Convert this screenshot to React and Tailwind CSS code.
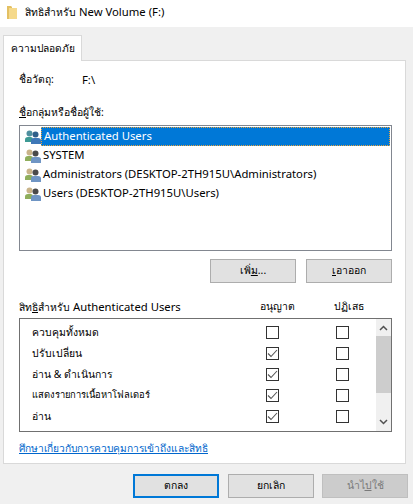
import React from 'react';

const principals = [
  'Authenticated Users',
  'SYSTEM',
  'Administrators (DESKTOP-2TH915U\\Administrators)',
  'Users (DESKTOP-2TH915U\\Users)',
];

const permissions = [
  { name: 'ควบคุมทั้งหมด', size: 'text-[10.4px]', allow: false },
  { name: 'ปรับเปลี่ยน', size: 'text-[10.4px]', allow: true },
  { name: 'อ่าน & ดำเนินการ', size: 'text-[10.4px]', allow: true },
  { name: 'แสดงรายการเนื้อหาโฟลเดอร์', size: 'text-[9.4px]', allow: true },
  { name: 'อ่าน', size: 'text-[10.4px]', allow: true },
];

const FolderIcon = () => (
  <svg width="10" height="13" viewBox="0 0 10 13">
    <path d="M0 0h4l1 1v12H0z" fill="#e3c063" />
    <path d="M2 2h8v11H2z" fill="#f5d98b" />
  </svg>
);

const UsersIcon = ({ selected }) => (
  <svg width="16" height="14" viewBox="0 0 16 14">
    <circle cx="4.5" cy="3.5" r="3" fill={selected ? '#4f8f9f' : '#c9b48a'} />
    <path d="M0 12V9.5Q0 7 3 7h3q2 0 2 2.5V12z" fill={selected ? '#3d9a94' : '#8fae5c'} />
    <circle cx="10.5" cy="4.5" r="3" fill={selected ? '#2f5f8a' : '#4a4a4a'} />
    <path d="M6 14v-3.5Q6 8 9 8h4q3 0 3 2.5V14z" fill={selected ? '#3f78b8' : '#6f95c4'} />
  </svg>
);

const Checkbox = ({ checked }) => (
  <span className="w-[13px] h-[13px] border border-[#333333] bg-white flex items-center justify-center">
    {checked && (
      <svg width="11" height="11" viewBox="0 0 11 11">
        <path d="M1 5.5l3 3 6-6.5" fill="none" stroke="#555555" strokeWidth="1.1" />
      </svg>
    )}
  </span>
);

const Button = ({ label, primary }) => (
  <button className={`w-[86px] h-[24px] bg-[#e1e1e1] text-black text-[10.4px] ${primary ? 'border-2 border-[#0078d7] mr-px' : 'border border-[#adadad]'}`}>
    {label}
  </button>
);

export default function App() {
  return (
    <div className="w-[413px] h-[504px] bg-[#f0f0f0] text-[11.3px] text-black flex flex-col overflow-hidden" style={{ fontFamily: '"Noto Sans", "Open Sans", sans-serif' }}>
      {/* Title bar */}
      <div className="h-[27px] bg-white flex items-center pl-[7px] pb-[3px] gap-[8px] shrink-0">
        <FolderIcon />
        <span className="text-[11.3px]"><span className="text-[10.4px]">สิทธิสำหรับ</span> New Volume (F:)</span>
      </div>

      {/* Tab */}
      <div className="pl-[3px] pt-[8px] shrink-0 h-[34px] flex">
        <div className="w-[79px] h-[26px] bg-white border border-b-0 border-[#d9d9d9] flex items-center justify-center relative z-10 text-[10.2px]">
          ความปลอดภัย
        </div>
      </div>

      {/* Panel */}
      <div className="ml-[3px] w-[403px] h-[404px] bg-white border border-[#d9d9d9] -mt-px px-[15px] shrink-0">
        <div className="flex h-[18px] mt-[10px] items-center">
          <span className="w-[63px] text-[10.4px]">ชื่อวัตถุ:</span>
          <span>F:\</span>
        </div>
        <div className="h-[18px] mt-[15px] flex items-center text-[10.4px]">
          <span><span className="underline">ชื่</span>อกลุ่มหรือชื่อผู้ใช้:</span>
        </div>

        <div className="w-[373px] h-[126px] mt-[3px] border border-[#828790] p-px">
          {principals.map((name, i) => (
            <div key={name} className="flex items-center h-[19px] pl-[4px]">
              <UsersIcon selected={i === 0} />
              <span className={i === 0 ? 'pl-[2px] flex-1 h-[19px] flex items-center bg-[#0078d7] text-white border border-dotted border-[#e8a33d]' : 'pl-[2px]'}>
                {name}
              </span>
            </div>
          ))}
        </div>

        <div className="w-[373px] flex justify-end gap-[10px] mt-[8px]">
          <Button label={<span>เพิ่<span className="underline">ม</span>...</span>} />
          <Button label={<span><span className="underline">เ</span>อาออก</span>} />
        </div>

        <div className="flex items-center h-[18px] mt-[15px]">
          <span className="w-[223px]">
            <span className="text-[10.4px]">สิท<span className="underline">ธิ</span>สำหรับ</span> Authenticated Users
          </span>
          <span className="w-[70px] text-center text-[10.4px]">อนุญาต</span>
          <span className="w-[70px] text-center ml-[2px] text-[10.4px]">ปฏิเสธ</span>
        </div>

        <div className="w-[373px] h-[114px] mt-[2px] border border-[#707070] flex">
          <div className="flex-1 pt-[3px]">
            {permissions.map((p) => (
              <div key={p.name} className="flex items-center h-[21px]">
                <span className={`w-[246px] pl-[12px] ${p.size}`}>{p.name}</span>
                <span className="w-[70px]"><Checkbox checked={p.allow} /></span>
                <span><Checkbox /></span>
              </div>
            ))}
          </div>
          <div className="w-[15px] h-[112px] bg-[#f0f0f0] flex flex-col">
            <div className="h-[17px] flex items-center justify-center">
              <svg width="9" height="6" viewBox="0 0 9 6"><path d="M1 5l3.5-3.5L8 5" fill="none" stroke="#505050" strokeWidth="1.5" /></svg>
            </div>
            <div className="h-[57px] bg-[#cdcdcd]" />
            <div className="flex-1 flex items-end justify-center pb-[6px]">
              <svg width="9" height="6" viewBox="0 0 9 6"><path d="M1 1l3.5 3.5L8 1" fill="none" stroke="#505050" strokeWidth="1.5" /></svg>
            </div>
          </div>
        </div>

        <div className="mt-[8px] h-[18px] flex items-center text-[10.2px]">
          <a href="#" className="text-[#0066cc] underline">ศึกษาเกี่ยวกับการควบคุมการเข้าถึงและสิทธิ</a>
        </div>
      </div>

      {/* Footer buttons */}
      <div className="flex justify-end gap-[8px] pr-[5px] mt-[10px]">
        <Button label="ตกลง" primary />
        <Button label="ยกเลิก" />
        <button className="w-[86px] h-[24px] bg-[#cccccc] border border-[#bfbfbf] text-[#7a7a7a] text-[10.4px]">
          นำไ<span className="underline">ป</span>ใช้
        </button>
      </div>
    </div>
  );
}
